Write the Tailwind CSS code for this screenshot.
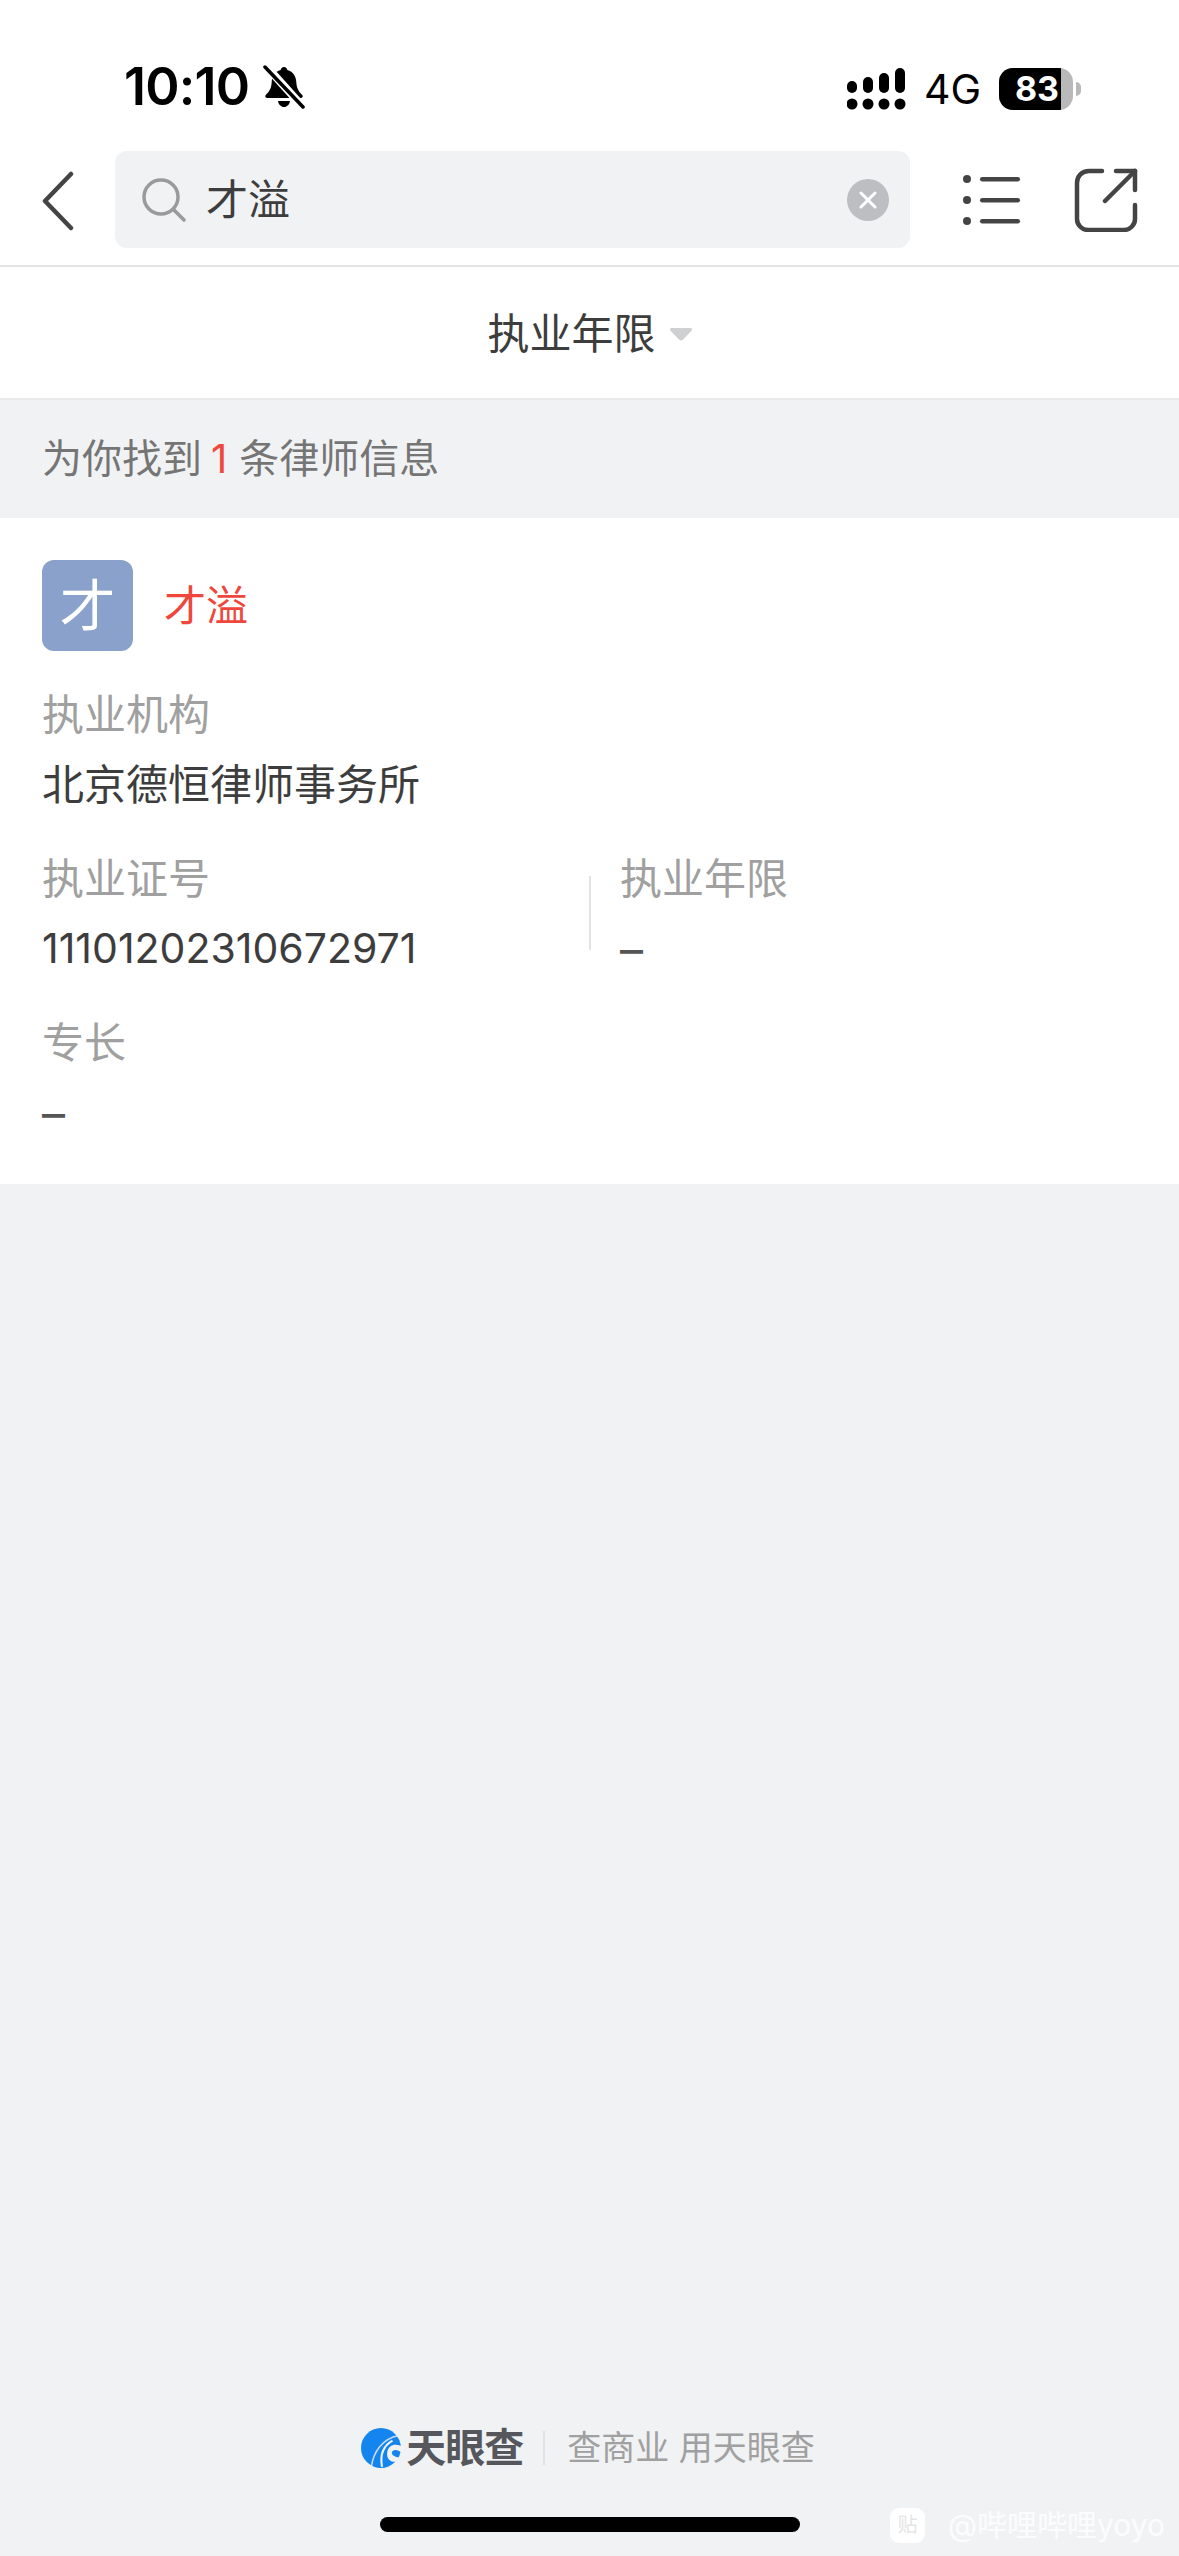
<!DOCTYPE html>
<html lang="zh-CN">
<head>
  <meta charset="UTF-8" />
  <title>律师信息</title>
  <meta name="viewport" content="width=device-width, initial-scale=1.0" />
  <script src="https://cdn.jsdelivr.net/npm/@tailwindcss/browser@4"></script>
</head>
<body class="bg-[#f1f2f4] font-['Inter','Noto_Sans_CJK_SC',sans-serif]">
  <div class="relative w-[1179px] h-[2556px] flex flex-col overflow-hidden">

    <!-- status bar -->
    <div class="h-[151px] bg-white flex items-start justify-between pt-[62px] pl-[124px] pr-[98px]">
      <div class="flex items-center gap-[14px] h-[50px]">
        <span class="text-[52px] leading-[50px] font-semibold tracking-[-0.8px] text-black">10:10</span>
        <svg class="w-[42px] h-[44px]" viewBox="0 0 42 42">
          <path d="M21 1c2 0 3 1.400 3.300 3 6 1.500 8.700 6.500 9 12 .3 6 2 9 6 13 1 1.500.3 3-1.700 3H4.400c-2 0-2.700-1.500-1.700-3 4-4 5.700-7 6-13 .3-5.500 3-10.500 9-12C18 2.400 19 1 21 1z" fill="#000"/>
          <path d="M15 35h12c-.5 3.500-3 6-6 6s-5.500-2.500-6-6z" fill="#000"/>
          <path d="M3 0l37 41" stroke="#fff" stroke-width="8"/>
          <path d="M2 1l38 40" stroke="#000" stroke-width="3.500" stroke-linecap="round"/>
        </svg>
      </div>
      <div class="flex items-center h-[46px] mt-[4px]">
        <svg class="w-[60px] h-[42px]" viewBox="0 0 60 42" fill="#000">
          <rect x="0" y="13" width="10" height="12" rx="5"/><rect x="16" y="9" width="10" height="16" rx="5"/><rect x="32" y="5" width="10" height="20" rx="5"/><rect x="48" y="0" width="10" height="25" rx="5"/>
          <circle cx="5" cy="36" r="5.500"/><circle cx="21" cy="36" r="5.500"/><circle cx="37" cy="36" r="5.500"/><circle cx="53" cy="36" r="5.500"/>
        </svg>
        <span class="ml-[17px] text-[41px] leading-[46px] text-black">4G</span>
        <div class="ml-[18px] relative w-[74px] h-[42px] rounded-[14px] bg-[#b9b9b9] overflow-hidden">
          <div class="w-[62px] h-full bg-black flex items-center justify-end pr-[2px]">
            <span class="text-[34px] leading-none font-bold text-white">83</span>
          </div>
        </div>
        <div class="ml-[3px] w-[5px] h-[14px] rounded-r-full bg-[#b9b9b9]"></div>
      </div>
    </div>

    <!-- search header -->
    <div class="h-[116px] bg-white border-b-2 border-[#e2e3e5] flex items-start pl-[42px]">
      <svg class="w-[32px] h-[60px] mt-[20px]" viewBox="0 0 32 60" fill="none" stroke="#444" stroke-width="4.500" stroke-linecap="round" stroke-linejoin="round"><path d="M29 3L3 30l26 27"/></svg>
      <div class="ml-[41px] w-[795px] h-[97px] rounded-[12px] bg-[#f1f2f4] flex items-center pl-[27px] pr-[21px]">
        <svg class="w-[44px] h-[44px]" viewBox="0 0 44 44" fill="none" stroke="#9a9a9a" stroke-width="3.500" stroke-linecap="round"><circle cx="19" cy="19" r="17"/><path d="M32 32l10 10"/></svg>
        <span class="ml-[20px] text-[42px] leading-none text-[#3d3d3d]">才溢</span>
        <div class="ml-auto w-[42px] h-[42px] rounded-full bg-[#bcbec1] flex items-center justify-center">
          <svg class="w-[18px] h-[18px]" viewBox="0 0 18 18" stroke="#fff" stroke-width="3" stroke-linecap="round"><path d="M2 2l14 14M16 2L2 16"/></svg>
        </div>
      </div>
      <svg class="ml-[53px] mt-[22px] w-[58px] h-[52px]" viewBox="0 0 58 52" fill="#444"><circle cx="4" cy="6" r="4"/><circle cx="4" cy="27" r="4"/><circle cx="4" cy="48" r="4"/><rect x="17" y="4" width="40" height="4.500" rx="2.200"/><rect x="17" y="25" width="40" height="4.500" rx="2.200"/><rect x="17" y="46" width="40" height="4.500" rx="2.200"/></svg>
      <svg class="ml-[53px] mt-[17px] w-[64px] h-[64px]" viewBox="0 0 64 64" fill="none" stroke="#444" stroke-width="4.500" stroke-linecap="round" stroke-linejoin="round"><path d="M28 3H15C8 3 3 8 3 15v36c0 6 5 11 11 11h36c6 0 11-5 11-11V37"/><path d="M42 3h19v19"/><path d="M61 3L31 33"/></svg>
    </div>

    <!-- filter -->
    <div class="h-[133px] pt-[3px] bg-white border-b-2 border-[#e8e9eb] flex items-center justify-center">
      <span class="text-[42px] leading-none text-[#3d3d3d]">执业年限</span>
      <svg class="ml-[14px] w-[22px] h-[13px]" viewBox="0 0 24 14" fill="#cfd0d2"><path d="M2 0h20c2 0 2.500 1.500 1.500 2.800l-9.500 10c-1 1-3 1-4 0L.500 2.800C-.500 1.500 0 0 2 0z"/></svg>
    </div>

    <!-- result count -->
    <div class="h-[118px] flex items-center px-[42px] text-[40px] leading-none text-[#757575]">
      为你找到<span class="ml-[9px] mr-[12px] text-[#f0473d]">1</span>条律师信息
    </div>

    <!-- lawyer card -->
    <div class="h-[666px] bg-white px-[42px] pt-[42px]">
      <div class="flex items-center">
        <div class="w-[91px] h-[91px] rounded-[12px] bg-[#89a1cb] flex items-center justify-center text-[56px] leading-none text-white">才</div>
        <span class="ml-[31px] text-[42px] leading-none text-[#f0473d]">才溢</span>
      </div>
      <div class="mt-[39px] text-[42px] leading-[50px] text-[#a0a0a0]">执业机构</div>
      <div class="mt-[20px] text-[42px] leading-[50px] text-[#3d3d3d]">北京德恒律师事务所</div>
      <div class="mt-[44px] flex">
        <div class="w-[547px]">
          <div class="text-[42px] leading-[50px] text-[#a0a0a0]">执业证号</div>
          <div class="mt-[19px] text-[41px] leading-[50px] text-[#3d3d3d]">11101202310672971</div>
        </div>
        <div class="w-[2px] h-[74px] mt-[22px] bg-[#e2e3e5]"></div>
        <div class="ml-[29px]">
          <div class="text-[42px] leading-[50px] text-[#a0a0a0]">执业年限</div>
          <div class="mt-[20px] text-[46px] leading-[50px] text-[#555]">–</div>
        </div>
      </div>
      <div class="mt-[44px] text-[42px] leading-[50px] text-[#a0a0a0]">专长</div>
      <div class="mt-[20px] text-[46px] leading-[50px] text-[#555]">–</div>
    </div>

    <!-- footer -->
    <div class="mt-auto flex items-center justify-center h-[44px] pr-[3px]">
      <svg class="w-[42px] h-[42px]" viewBox="0 0 40 40">
        <circle cx="19" cy="20" r="19" fill="#1485ee"/>
        <path d="M10 37C12 24 20 11 36 8" fill="none" stroke="#f1f2f4" stroke-width="1.500" opacity=".8"/>
        <path d="M20 38C18 27 21 18 30 13" fill="none" stroke="#f1f2f4" stroke-width="2"/>
        <path d="M25 24c1-7 8-9 15-5l-1 6c-3-3-7-4-9-2-2 2 1 6 7 6l-3 4c-6 1-10-3-9-9z" fill="#f1f2f4"/>
      </svg>
      <span class="ml-[3px] text-[40px] leading-none font-bold tracking-[-1px] text-[#55575c]">天眼查</span>
      <div class="ml-[20px] w-[2px] h-[34px] bg-[#e2e3e5]"></div>
      <span class="ml-[22px] text-[34px] leading-none text-[#a0a0a0] whitespace-nowrap">查商业 用天眼查</span>
    </div>
    <div class="mt-[47px] mb-[24px] mx-auto w-[420px] h-[15px] rounded-full bg-black"></div>

    <!-- watermark -->
    <div class="absolute left-[890px] top-[2505px] flex items-center whitespace-nowrap text-white/80">
      <div class="relative w-[35px] h-[35px] rounded-[9px] bg-white/95 flex items-center justify-center text-[20px] leading-none text-[#e4e5e7]">贴</div>
      <span class="ml-[23px] text-[30px] leading-[40px]">@哔哩哔哩yoyo</span>
    </div>
  </div>
</body>
</html>
